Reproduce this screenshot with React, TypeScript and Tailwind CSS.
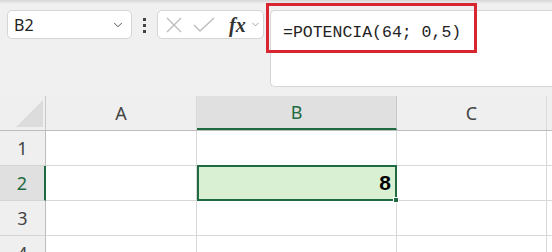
import { ChevronDown } from "lucide-react";

const cols = [
  { key: "A", w: "w-[151px]" },
  { key: "B", w: "w-[200px]" },
  { key: "C", w: "w-[150px]" },
];

function XIcon() {
  return (
    <svg width="16" height="16" viewBox="0 0 16 16" className="text-[#bdbdbd]">
      <path d="M1 1 L15 15 M15 1 L1 15" stroke="currentColor" strokeWidth="1.4" fill="none" />
    </svg>
  );
}

function CheckIcon() {
  return (
    <svg width="22" height="16" viewBox="0 0 22 16" className="text-[#bdbdbd]">
      <path d="M1 8 L7 14 L21 1" stroke="currentColor" strokeWidth="1.4" fill="none" />
    </svg>
  );
}

export default function App() {
  return (
    <div className="relative h-[252px] w-[552px] overflow-hidden bg-[#f0f0f0] font-['Noto_Sans',sans-serif]">
      {/* toolbar */}
      <div className="h-[4px] bg-gradient-to-b from-[#d6d6d6] to-[#f0f0f0]" />
      <div className="flex h-[92px] items-start pt-[6px]">
        <div className="ml-[7px] flex h-[29px] w-[125px] items-center justify-between rounded-[5px] border border-[#d5d5d5] bg-white pl-[6px] pr-[6px]">
          <span className="text-[16px] text-[#222]">B2</span>
          <ChevronDown size={14} strokeWidth={1.6} className="text-[#444]" />
        </div>
        <div className="ml-[11px] mt-[8px] flex w-[4px] flex-col gap-[3px]">
          <span className="h-[3px] w-[3px] bg-[#444]" />
          <span className="h-[3px] w-[3px] bg-[#444]" />
          <span className="h-[3px] w-[3px] bg-[#444]" />
        </div>
        <div className="ml-[10px] flex h-[29px] w-[107px] items-center rounded-[5px] border border-[#d5d5d5] bg-white pl-[8px]">
          <XIcon />
          <span className="ml-[11px]">
            <CheckIcon />
          </span>
          <span className="ml-[14px] font-['Liberation_Serif',serif] text-[20px] font-bold italic leading-none text-[#333]">
            fx
          </span>
          <ChevronDown size={11} strokeWidth={1.6} className="ml-[4px] text-[#888]" />
        </div>
        <div className="ml-[6px] h-[77px] flex-1 rounded-l-[5px] border border-r-0 border-[#d5d5d5] bg-white pl-[12px] pt-[8px]">
          <span className="font-['Liberation_Mono',monospace] text-[16.5px] text-[#222]">
            =POTENCIA(64; 0,5)
          </span>
        </div>
      </div>

      {/* red highlight */}
      <div className="absolute left-[266px] top-[3px] h-[50px] w-[211px] border-[3px] border-[#d7262f]" />

      {/* grid header */}
      <div className="flex h-[35px] border-b border-[#bdbdbd] bg-[#efefef]">
        <div className="relative w-[46px] border-r border-[#c8c8c8]">
          <svg width="28" height="27" viewBox="0 0 28 27" className="absolute left-[16px] top-[4px]">
            <polygon points="27,0 27,27 0,27" fill="#dcdcdc" />
          </svg>
        </div>
        {cols.map((c) => (
          <div
            key={c.key}
            className={`${c.w} flex items-center justify-center border-r text-[18px] ${
              c.key === "B"
                ? "border-[#c8c8c8] border-b-2 border-b-[#1e6b41] bg-[#e0e0e0] text-[#1e6b41]"
                : "border-[#dadada] text-[#444]"
            }`}
          >
            {c.key}
          </div>
        ))}
        <div className="flex-1" />
      </div>

      {/* grid rows */}
      {[1, 2, 3, 4].map((r) => (
        <div key={r} className="flex h-[35px] bg-white">
          <div
            className={`flex w-[46px] items-center justify-center border-b border-r text-[18px] ${
              r === 2
                ? "border-b-[#d4d4d4] border-r-2 border-r-[#1e6b41] bg-[#e0e0e0] text-[#1e6b41]"
                : "border-b-[#d4d4d4] border-r-[#bdbdbd] bg-[#efefef] text-[#444]"
            }`}
          >
            {r}
          </div>
          {cols.map((c) =>
            r === 2 && c.key === "B" ? (
              <div
                key={c.key}
                className={`${c.w} relative -mt-[1px] flex h-[36px] items-center justify-end border-2 border-[#1e6b41] bg-[#d9f0d2] pr-[4px]`}
              >
                <span className="font-['Liberation_Sans',sans-serif] text-[21px] font-bold text-black">8</span>
                <span className="absolute -bottom-[4px] -right-[4px] h-[6px] w-[6px] border border-white bg-[#1e6b41]" />
              </div>
            ) : (
              <div key={c.key} className={`${c.w} border-b border-r border-[#d8d8d8]`} />
            )
          )}
          <div className="flex-1 border-b border-[#d8d8d8]" />
        </div>
      ))}
    </div>
  );
}
